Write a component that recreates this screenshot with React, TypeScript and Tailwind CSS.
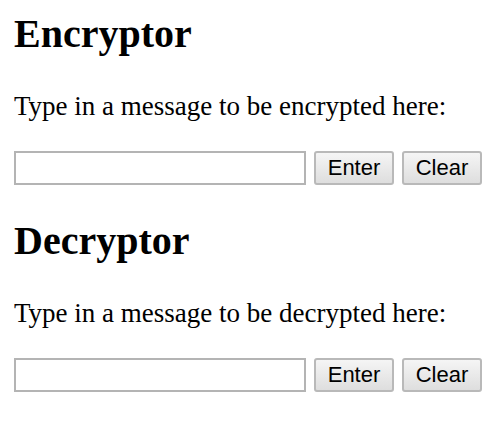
import React, { useState } from 'react';

function CipherBox({ title, verb }: { title: string; verb: string }) {
    const [text, setText] = useState('');

    return (
        <section className="mb-[33px]">
            <h2 className="text-[40px] leading-[46px] font-bold">{title}</h2>
            <p className="mt-[34px] text-[27px] leading-[31px]">
                Type in a message to be {verb} here:
            </p>
            <div className="mt-[29px] flex items-center gap-[8px]">
                <input
                    type="text"
                    value={text}
                    onChange={(e) => setText(e.target.value)}
                    className="w-[292px] h-[34px] border-2 border-[#b4b4b4] bg-white px-1 outline-none"
                />
                <button
                    className="w-[80px] h-[34px] rounded-[3px] border-2 border-[#b9b9b9] bg-gradient-to-b from-[#f5f5f5] to-[#dedede] text-[22px] leading-none text-black font-['Liberation_Sans',Arial,sans-serif]"
                >
                    Enter
                </button>
                <button
                    onClick={() => setText('')}
                    className="w-[80px] h-[34px] rounded-[3px] border-2 border-[#b9b9b9] bg-gradient-to-b from-[#f5f5f5] to-[#dedede] text-[22px] leading-none text-black font-['Liberation_Sans',Arial,sans-serif]"
                >
                    Clear
                </button>
            </div>
        </section>
    );
}

export default function App() {
    return (
        <div className="min-h-[439px] w-[500px] bg-white text-black px-[14px] pt-[11px] font-['Liberation_Serif','Times_New_Roman',serif]">
            <CipherBox title="Encryptor" verb="encrypted" />
            <CipherBox title="Decryptor" verb="decrypted" />
        </div>
    );
}
